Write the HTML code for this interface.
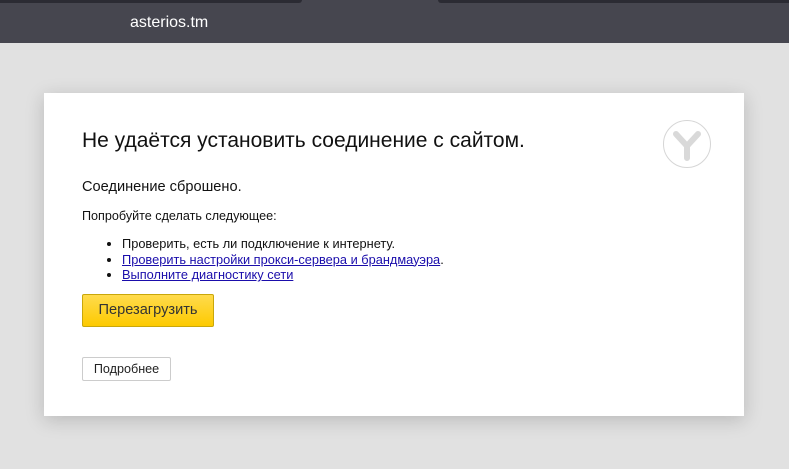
<!DOCTYPE html>
<html><head><meta charset="utf-8"><style>
body{margin:0;width:789px;height:469px;background:#e1e1e1;font-family:"Liberation Sans",Arial,sans-serif;overflow:hidden;position:relative}
.bar{position:absolute;left:0;top:0;width:789px;height:43px;background:#46464f}
.strip1{position:absolute;left:0;top:0;width:302px;height:3px;background:#2b2b33;border-radius:0 0 4px 0}
.strip2{position:absolute;left:438px;top:0;width:351px;height:3px;background:#2b2b33;border-radius:0 0 0 4px}
.title{position:absolute;left:130px;top:14px;color:#fff;font-size:16px}
.card{position:absolute;left:44px;top:93px;width:700px;height:323px;background:#fff;box-shadow:0 4px 18px rgba(0,0,0,.18)}
h1{position:absolute;left:38px;top:36px;margin:0;font-weight:normal;font-size:21px;color:#111;white-space:nowrap}
.p1{position:absolute;left:38px;top:86px;font-size:14.6px;color:#111}
.p2{position:absolute;left:38px;top:116px;font-size:12.6px;color:#111}
ul{position:absolute;left:38px;top:143px;margin:0;padding-left:40px;font-size:12.8px;line-height:15.5px;color:#111;white-space:nowrap}
a{color:#1a0dab}
.btn{position:absolute;left:38px;top:201px;width:130px;height:31px;background:linear-gradient(#ffdb4d,#fdca00);border:1px solid #c9a70a;border-radius:2px;font-size:14.6px;color:#333;text-align:center;line-height:31px}
.btn2{position:absolute;left:38px;top:264px;width:87px;height:22px;border:1px solid #ccc;border-radius:2px;font-size:12.6px;color:#222;text-align:center;line-height:22px}
svg{position:absolute;left:618px;top:26px}
</style></head><body>
<div class="bar"></div><div class="strip1"></div><div class="strip2"></div>
<div class="title">asterios.tm</div>
<div class="card">
<h1>Не удаётся установить соединение с сайтом.</h1>
<div class="p1">Соединение сброшено.</div>
<div class="p2">Попробуйте сделать следующее:</div>
<ul><li>Проверить, есть ли подключение к интернету.</li><li><a href="#">Проверить настройки прокси-сервера и брандмауэра</a>.</li><li><a href="#">Выполните диагностику сети</a></li></ul>
<div class="btn">Перезагрузить</div>
<div class="btn2">Подробнее</div>
<svg width="50" height="50" viewBox="0 0 50 50"><circle cx="25" cy="25" r="23.5" fill="#fff" stroke="#d6d6d6" stroke-width="1"/><path d="M14 15 L25 27 L36 15 M25 27 V39" fill="none" stroke="#d9d9d9" stroke-width="6" stroke-linecap="round" stroke-linejoin="round"/></svg>
</div>
</body></html>
